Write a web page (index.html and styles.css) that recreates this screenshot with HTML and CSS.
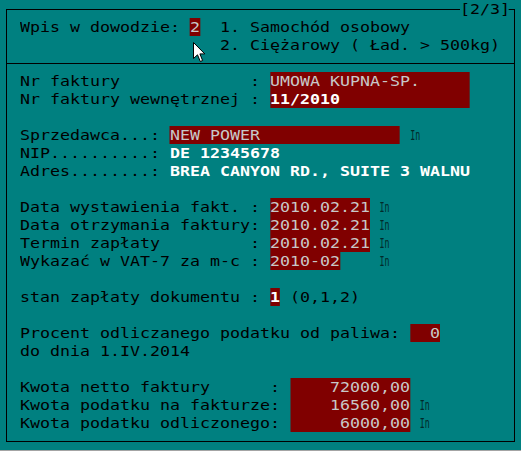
FILE: index.html
```html
<!DOCTYPE html>
<html lang="pl">
<head>
<meta charset="utf-8">
<title>Wpis w dowodzie</title>
<link rel="stylesheet" href="styles.css">
</head>
<body>
<div class="screen">
  <div class="frame">
    <div class="tag">[2/3]</div>
    <div class="grid">
      <div class="row">Wpis w dowodzie: <span class="fld">2</span>  1. Samochód osobowy</div>
      <div class="row">                    2. Ciężarowy ( Ład. &gt; 500kg)</div>
    </div>
    <div class="sep"></div>
    <div class="grid">
      <div class="row">Nr faktury             : <span class="fld">UMOWA KUPNA-SP.     </span></div>
      <div class="row">Nr faktury wewnętrznej : <span class="fld b">11/2010             </span></div>
      <div class="row"></div>
      <div class="row">Sprzedawca...: <span class="fld">NEW POWER              </span> <span class="in">In</span></div>
      <div class="row">NIP..........: <span class="b">DE 12345678</span></div>
      <div class="row">Adres........: <span class="b">BREA CANYON RD., SUITE 3 WALNU</span></div>
      <div class="row"></div>
      <div class="row">Data wystawienia fakt. : <span class="fld">2010.02.21</span> <span class="in">In</span></div>
      <div class="row">Data otrzymania faktury: <span class="fld">2010.02.21</span> <span class="in">In</span></div>
      <div class="row">Termin zapłaty         : <span class="fld">2010.02.21</span> <span class="in">In</span></div>
      <div class="row">Wykazać w VAT-7 za m-c : <span class="fld">2010-02</span>    <span class="in">In</span></div>
      <div class="row"></div>
      <div class="row">stan zapłaty dokumentu : <span class="fld b">1</span> (0,1,2)</div>
      <div class="row"></div>
      <div class="row">Procent odliczanego podatku od paliwa: <span class="fld">  0</span></div>
      <div class="row">do dnia 1.IV.2014</div>
      <div class="row"></div>
      <div class="row">Kwota netto faktury      : <span class="fld">    72000,00</span></div>
      <div class="row">Kwota podatku na fakturze: <span class="fld">    16560,00</span> <span class="in">In</span></div>
      <div class="row">Kwota podatku odliczonego: <span class="fld">     6000,00</span> <span class="in">In</span></div>
    </div>
  </div>
  <svg class="cursor" width="13" height="21" viewBox="0 0 13 21">
    <polygon points="0.5,0.5 0.5,16.5 4.5,12.8 7.3,19.5 9.6,18.5 6.9,11.9 11.8,11.9" fill="#fff" stroke="#000" stroke-width="1" stroke-linejoin="miter"/>
  </svg>
</div>
</body>
</html>
```
FILE: styles.css
```css
html, body {
  margin: 0;
  padding: 0;
  background: #008080;
  overflow: hidden;
}

.screen {
  position: relative;
  box-sizing: border-box;
  width: 521px;
  height: 451px;
  padding: 9px 0 0 6px;
  border-bottom: 1px solid #a4a4a4;
}

.frame {
  position: relative;
  box-sizing: border-box;
  width: 509px;
  height: 433px;
  border: 1px solid #000;
  padding-top: 8px;
}

.grid,
.tag {
  font-family: "DejaVu Sans Mono", monospace;
  font-size: 14px;
  line-height: 18px;
  color: #000;
  transform: scaleX(1.18642);
  transform-origin: 0 0;
}

.grid {
  margin-left: 13px;
  width: 48ch;
}

.tag {
  position: absolute;
  top: -10px;
  left: 453px;
  width: 41.3px;
  height: 18px;
  white-space: pre;
  background: #008080;
}

.row {
  height: 18px;
  white-space: pre;
}

.sep {
  height: 9px;
  border-bottom: 1px solid #000;
  margin-bottom: 8px;
}

.fld {
  display: inline-block;
  height: 18px;
  background: #800000;
  color: #c8c8c8;
}

.b {
  font-weight: bold;
  color: #fff;
}

.in {
  display: inline-block;
  width: 1ch;
  color: #002a2a;
  transform: scaleX(0.5);
  transform-origin: 0 0;
}

.cursor {
  position: absolute;
  left: 193px;
  top: 42px;
}
```
